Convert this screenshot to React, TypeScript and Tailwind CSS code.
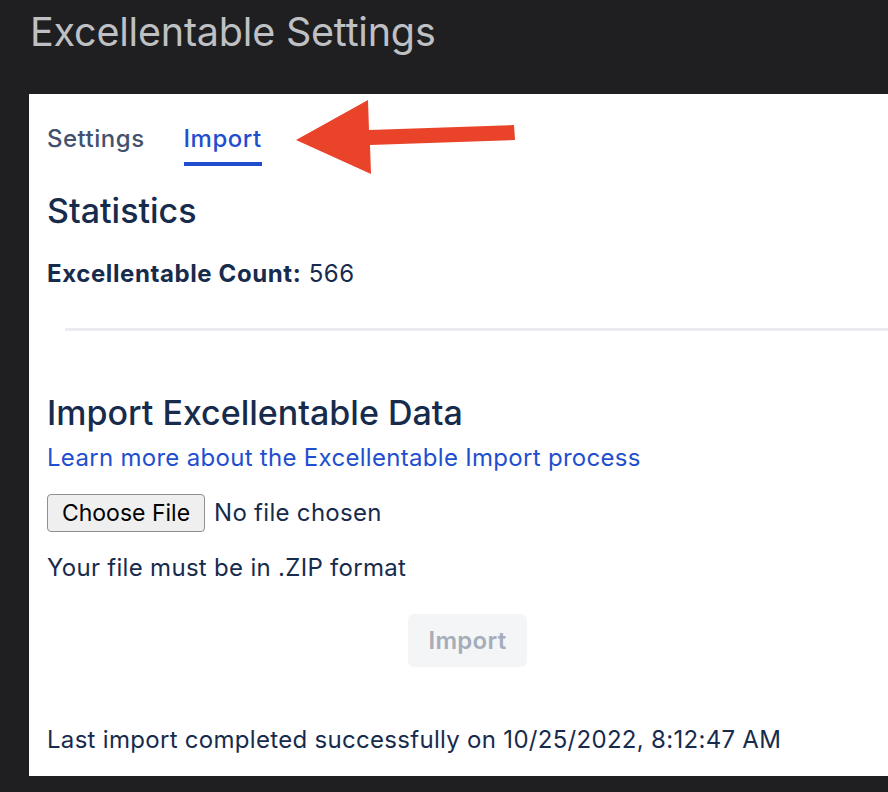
import React from "react";

const font = { fontFamily: "Inter, 'Noto Sans', 'Liberation Sans', sans-serif" };

function Arrow() {
  return (
    <svg className="absolute left-0 top-0 pointer-events-none" width="888" height="792" viewBox="0 0 888 792">
      <polygon
        points="296,140 368,100 369,130 514,125 515,140 370,145 371,174"
        fill="#e9432a"
      />
    </svg>
  );
}

export default function App() {
  return (
    <div className="relative w-[888px] h-[792px] bg-[#1f1f21] overflow-hidden" style={font}>
      <h1 className="pl-[30px] pt-[8px] h-[94px] text-[39.5px] leading-[48px] text-[#bfc0c3] font-normal tracking-[-0.2px]">
        Excellentable Settings
      </h1>
      <div className="ml-[29px] h-[682px] bg-white pl-[18px] pt-[28px] tracking-[0.3px]">
        {/* Tabs */}
        <div className="flex gap-[39px] text-[24px] leading-[34px] font-medium tracking-[0.5px]">
          <div className="text-[#42526e] pb-[6px]">Settings</div>
          <div className="text-[#1f4fcf] border-b-[4px] border-[#1f4fcf] pb-[6px]">Import</div>
        </div>

        <h2 className="mt-[25px] text-[34px] leading-[40px] font-medium text-[#172b4d] tracking-normal">Statistics</h2>
        <p className="mt-[27px] text-[24px] leading-[32px] text-[#172b4d] tracking-[0.6px]">
          <span className="font-bold">Excellentable Count:</span> 566
        </p>

        <div className="ml-[18px] mt-[38px] h-[3px] bg-[#ebecf0]" />

        <h2 className="mt-[62px] text-[34px] leading-[40px] font-medium text-[#172b4d] tracking-normal">
          Import Excellentable Data
        </h2>
        <a className="block mt-[9px] text-[24px] leading-[32px] text-[#1f4fcf]">
          Learn more about the Excellentable Import process
        </a>

        <div className="mt-[20px] flex items-center gap-[9px]">
          <button className="h-[38px] w-[158px] border border-[#8f8f8f] rounded-[4px] bg-[#efefef] text-[23px] text-black tracking-normal">
            Choose File
          </button>
          <span className="text-[24px] text-[#172b4d]">No file chosen</span>
        </div>

        <p className="mt-[20px] text-[24px] leading-[32px] text-[#172b4d]">Your file must be in .ZIP format</p>

        <div className="mt-[30px] flex justify-center">
          <button className="h-[53px] w-[119px] rounded-[6px] bg-[#f4f5f7] text-[24px] font-semibold text-[#a5adba]">
            Import
          </button>
        </div>

        <p className="mt-[57px] text-[24px] leading-[32px] text-[#172b4d]">
          Last import completed successfully on 10/25/2022, 8:12:47 AM
        </p>
      </div>
      <Arrow />
    </div>
  );
}
